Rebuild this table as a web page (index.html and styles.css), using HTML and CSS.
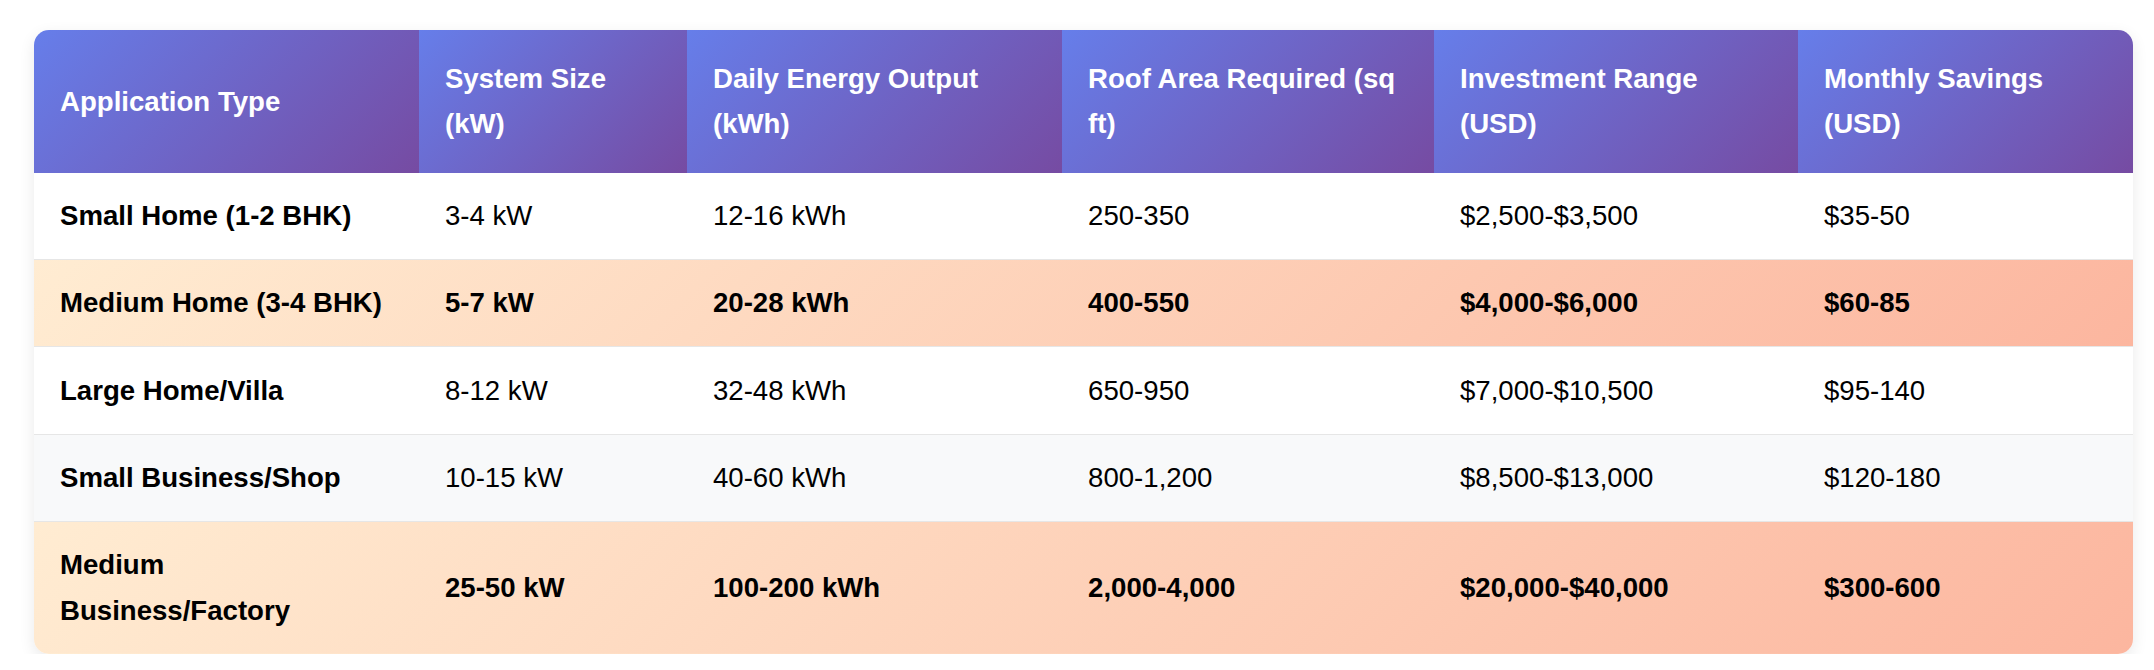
FILE: index.html
```html
<!DOCTYPE html>
<html lang="en">
<head>
<meta charset="utf-8">
<title>Solar System Sizing</title>
<link rel="stylesheet" href="styles.css">
</head>
<body>
<div class="page">
  <div class="table-wrap">
    <table class="sizing">
      <colgroup>
        <col class="col-app">
        <col class="col-size">
        <col class="col-output">
        <col class="col-roof">
        <col class="col-invest">
        <col class="col-savings">
      </colgroup>
      <thead>
        <tr>
          <th>Application Type</th>
          <th>System Size (kW)</th>
          <th>Daily Energy Output (kWh)</th>
          <th>Roof Area Required (sq ft)</th>
          <th>Investment Range (USD)</th>
          <th>Monthly Savings (USD)</th>
        </tr>
      </thead>
      <tbody>
        <tr>
          <td class="name">Small Home (1-2 BHK)</td>
          <td>3-4 kW</td>
          <td>12-16 kWh</td>
          <td>250-350</td>
          <td>$2,500-$3,500</td>
          <td>$35-50</td>
        </tr>
        <tr class="highlight">
          <td class="name">Medium Home (3-4 BHK)</td>
          <td>5-7 kW</td>
          <td>20-28 kWh</td>
          <td>400-550</td>
          <td>$4,000-$6,000</td>
          <td>$60-85</td>
        </tr>
        <tr>
          <td class="name">Large Home/Villa</td>
          <td>8-12 kW</td>
          <td>32-48 kWh</td>
          <td>650-950</td>
          <td>$7,000-$10,500</td>
          <td>$95-140</td>
        </tr>
        <tr class="alt">
          <td class="name">Small Business/Shop</td>
          <td>10-15 kW</td>
          <td>40-60 kWh</td>
          <td>800-1,200</td>
          <td>$8,500-$13,000</td>
          <td>$120-180</td>
        </tr>
        <tr class="highlight">
          <td class="name">Medium Business/Factory</td>
          <td>25-50 kW</td>
          <td>100-200 kWh</td>
          <td>2,000-4,000</td>
          <td>$20,000-$40,000</td>
          <td>$300-600</td>
        </tr>
      </tbody>
    </table>
  </div>
</div>
</body>
</html>
```

FILE: styles.css
```css
html, body {
  margin: 0;
  padding: 0;
  background: #ffffff;
}

body {
  font-family: "Liberation Sans", Arial, Helvetica, sans-serif;
}

.page {
  padding: 30px 21px 0 34px;
}

.table-wrap {
  border-radius: 15px;
  overflow: hidden;
  box-shadow: 0 5px 16px rgba(0, 0, 0, 0.09);
}

.sizing {
  width: 100%;
  border-collapse: collapse;
  table-layout: fixed;
  font-size: 27.6px;
  line-height: 45.6px;
}

.col-app { width: 18.34%; }
.col-size { width: 12.77%; }
.col-output { width: 17.87%; }
.col-roof { width: 17.72%; }
.col-invest { width: 17.34%; }
.col-savings { width: 15.96%; }

.sizing th {
  background: linear-gradient(135deg, #667eea 0%, #764ba2 100%);
  color: #ffffff;
  font-weight: bold;
  text-align: left;
  vertical-align: middle;
  padding: 25.9px 26px;
}

.sizing td {
  padding: 20.3px 26px;
  color: #000000;
  vertical-align: middle;
  border-bottom: 1px solid #e6e6e6;
}

.sizing tbody tr:last-child td {
  border-bottom: none;
}

.sizing td.name {
  font-weight: bold;
}

.sizing tr.alt {
  background: #f8f9fa;
}

.sizing tr.highlight {
  background: linear-gradient(135deg, #ffecd2 0%, #fcb69f 100%);
}

.sizing tr.highlight td {
  font-weight: bold;
}
```
